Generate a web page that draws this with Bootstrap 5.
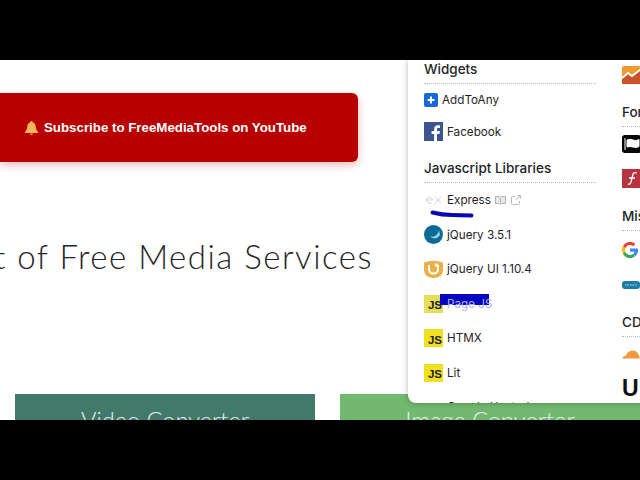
<!doctype html>
<html lang="en">
<head>
<meta charset="utf-8">
<title>Free Media Tools</title>
<link href="https://cdn.jsdelivr.net/npm/bootstrap@5.3.0/dist/css/bootstrap.min.css" rel="stylesheet">
<style>
html,body{margin:0;background:#000;overflow:hidden}
.stage{width:640px;height:480px}
.letterbox{height:60px;flex:none;background:#000}
.pagearea{height:360px;flex:none;background:#fff;position:relative;overflow:hidden}
.subbanner{margin-top:33px;width:358px;height:69px;flex:none;background:#b80000;border-radius:0 6px 6px 0;box-shadow:0 3px 8px rgba(184,0,0,.28);color:#fff;font:700 13.3px "Liberation Sans",sans-serif;padding-left:24px;gap:5px}
.herohead{margin-top:72px;margin-bottom:0;width:373px;height:44px;justify-content:flex-end;overflow:hidden;white-space:nowrap;font:300 33px/44px Lato,sans-serif;letter-spacing:1.5px;color:#262626;flex:none}
.toolrow{margin-top:116px;padding-left:15px;gap:25px;flex:none}
.toolcard{width:300px;height:60px;flex:none;color:#e6f2ee;font:300 23.6px/1 Lato,sans-serif;text-align:center;padding-top:15px}
.tool-a{background:#41796b}
.tool-b{background:#72b86e}
.popmenu{position:absolute;left:408px;top:0;width:300px;height:343px;background:#fff;border-radius:0 0 0 8px;box-shadow:0 0 6px rgba(0,0,0,.28);overflow:hidden;font:400 11.7px Inter,sans-serif;color:#1f2328;padding-left:16px;gap:26px}
.menucol{width:172px;flex:none}
.menucol-b{width:60px;flex:none}
.menuhead{font-weight:500;font-size:13.5px;line-height:18px;padding-bottom:5px;border-bottom:1px dotted #bbb;margin:0;color:#22262a}
.menuhead-gap{margin-top:11px}
.menuhead-top{margin-top:13px}
.menurow{height:34.5px;gap:4px;align-items:center;white-space:nowrap;position:relative}
.menurow-w1{height:31px}
.menurow-w2{height:33px}
.righticon{height:34.5px;align-items:center}
.righticon-lead{height:30px}
.righticon-push{margin-top:2px}
.jsbadge{width:19px;height:18px;background:#f0e020;color:#222;font:700 11.5px/1 "Liberation Sans",sans-serif;display:flex;align-items:flex-end;justify-content:flex-end;padding:0 1px 1px 0;flex:none}
.jsbadge-pale{background:#e6de5a}
.exmark{margin-left:2px;margin-right:1px}
.tinyglyph{margin-left:1px}
.penline{position:absolute;left:6px;top:27px}
.markerbox{position:absolute;left:16px;top:7px;width:49px;height:11px;background:#0505c0}
.markedtext{position:relative;color:#aab2f2}
.lowerrow{padding-left:23px}
.ubold{font:900 23px/1 "Liberation Sans",sans-serif;color:#111}
</style>
</head>
<body>
<div class="stage d-flex flex-column">
  <div class="letterbox"></div>
  <main class="pagearea d-flex flex-column">
    <div class="subbanner d-flex align-items-center">
      <svg width="15" height="14" viewBox="0 0 15 14"><path d="M7.500 0C6.600 0 6.200.7 6.200 1.300 4 2 3.400 4 3.200 6c-.2 2.300-1 3.700-2.200 4.800V12h13v-1.200C12.800 9.700 12 8.300 11.800 6 11.600 4 11 2 8.800 1.300 8.800.7 8.400 0 7.500 0z" fill="#f3b35c"/><path d="M6 12.500h3c0 1-.7 1.500-1.500 1.500S6 13.500 6 12.500z" fill="#ec8f4a"/></svg>
      <span>Subscribe to FreeMediaTools on YouTube</span>
    </div>
    <h1 class="herohead d-flex">List of Free Media Services</h1>
    <div class="toolrow d-flex">
      <div class="toolcard tool-a">Video Converter</div>
      <div class="toolcard tool-b">Image Converter</div>
    </div>

    <aside class="popmenu d-flex">
      <div class="menucol">
        <h2 class="menuhead">Widgets</h2>
        <div class="menurow menurow-w1 d-flex"><svg width="14" height="14" viewBox="0 0 14 14"><rect width="14" height="14" rx="2" fill="#1768d8"/><path d="M7 3.500v7M3.500 7h7" stroke="#fff" stroke-width="2"/></svg><span>AddToAny</span></div>
        <div class="menurow menurow-w2 d-flex"><svg width="19" height="19" viewBox="0 0 19 19"><rect width="19" height="19" fill="#3b5590"/><path d="M13 19v-7h2.500l.4-3H13V7.300c0-.9.3-1.400 1.500-1.400H16V3.300c-.4 0-1.200-.1-2.200-.1-2.200 0-3.700 1.300-3.700 3.800V9H7.600v3h2.500v7z" fill="#fff"/></svg><span>Facebook</span></div>
        <h2 class="menuhead menuhead-gap">Javascript Libraries</h2>
        <div class="menurow d-flex">
          <svg class="exmark" width="16" height="10" viewBox="0 0 16 10"><path d="M1 5h5.500M6.500 5a3 3 0 1 0-1 2.500M9 1.500l6 7M15 1.500l-6 7" stroke="#d0d0d6" stroke-width="1" fill="none"/></svg>
          <span>Express</span>
          <svg width="11" height="10" viewBox="0 0 11 10"><path d="M.5 1.500h4l1 1 1-1h4v7h-4l-1 1-1-1h-4zM5.500 2.500v6" fill="#e8e8e8" stroke="#b0b0b0"/></svg>
          <svg class="tinyglyph" width="10" height="10" viewBox="0 0 10 10"><path d="M8.500 6v2.500a1 1 0 0 1-1 1h-6a1 1 0 0 1-1-1v-6a1 1 0 0 1 1-1H4M5 5l4.500-4.500M6.500.5h3v3" fill="none" stroke="#b8b8b8"/></svg>
          <svg class="penline" width="44" height="8" viewBox="0 0 44 8"><path d="M2.500 2.500Q12 5 22 5T41.500 5.500" fill="none" stroke="#0a0ab4" stroke-width="4" stroke-linecap="round"/></svg>
        </div>
        <div class="menurow d-flex"><svg width="19" height="19" viewBox="0 0 19 19"><circle cx="9.500" cy="9.500" r="9.500" fill="#0c6a93"/><path d="M15 5c-1 5-5 8-9 6 2 3 7 4 10-1" fill="#8fd0e8"/></svg><span>jQuery 3.5.1</span></div>
        <div class="menurow d-flex"><svg width="19" height="18" viewBox="0 0 19 18"><path d="M0 2.500Q9.500-1 19 2.500V11q-1 7-9.500 7T0 11z" fill="#eab04a"/><path d="M5 5v4a4.500 4.500 0 0 0 9 0V5" fill="none" stroke="#fff" stroke-width="2"/><circle cx="12.500" cy="5" r="1.800" fill="#fff"/></svg><span>jQuery UI 1.10.4</span></div>
        <div class="menurow d-flex"><div class="jsbadge jsbadge-pale">JS</div><div class="markerbox"></div><span class="markedtext">Page JS</span></div>
        <div class="menurow d-flex"><div class="jsbadge">JS</div><span>HTMX</span></div>
        <div class="menurow d-flex"><div class="jsbadge">JS</div><span>Lit</span></div>
        <div class="menurow lowerrow d-flex"><span>Google Hosted</span></div>
      </div>
      <div class="menucol-b">
        <div class="righticon righticon-lead d-flex"><svg width="19" height="18" viewBox="0 0 19 18"><rect width="19" height="18" rx="2" fill="#ef9a2e"/><path d="M0 18V13l6-5 4 3 9-7v14z" fill="#c9532a"/><path d="M0 12l6-5 4 3 9-7" stroke="#fff" stroke-width="1.800" fill="none"/></svg></div>
        <h2 class="menuhead menuhead-top">Fonts</h2>
        <div class="righticon d-flex"><svg width="19" height="18" viewBox="0 0 19 18"><rect width="19" height="18" rx="3" fill="#050505"/><path d="M3 3v12M5 5q3-1.500 6 0t6-.5v7q-3 1.500-6 .5t-6 0z" stroke="#fff" fill="#fff"/></svg></div>
        <div class="righticon d-flex"><svg width="19" height="19" viewBox="0 0 19 19"><rect width="19" height="19" fill="#b5343f"/><path d="M6 15q2 1 3-2l2-8q1-2 4-1M7 9h6" stroke="#fff" stroke-width="1.300" fill="none"/></svg></div>
        <h2 class="menuhead menuhead-gap">Misc</h2>
        <div class="righticon righticon-push d-flex"><svg width="16" height="16" viewBox="0 0 16 16"><path d="M8 3a5 5 0 0 1 3.300 1.300L13.500 2A8 8 0 0 0 .9 4.300l2.500 2A5 5 0 0 1 8 3z" fill="#ea4335"/><path d="M.9 4.300a8 8 0 0 0 0 7.400l2.500-2a5 5 0 0 1 0-3.400z" fill="#fbbc05"/><path d="M.9 11.700A8 8 0 0 0 13.400 14l-2.400-2A5 5 0 0 1 3.400 9.700z" fill="#34a853"/><path d="M16 6.500H8v3.200h4.500A4 4 0 0 1 11 12l2.400 2A8 8 0 0 0 16 6.500z" fill="#4285f4"/></svg></div>
        <div class="righticon d-flex"><svg width="18" height="8" viewBox="0 0 18 8"><rect width="18" height="8" rx="3" fill="#1c7ea5"/><path d="M3 4h12" stroke="#cde" stroke-dasharray="1.500 1"/></svg></div>
        <h2 class="menuhead menuhead-gap">CDN</h2>
        <div class="righticon d-flex"><svg width="19" height="10" viewBox="0 0 19 10"><path d="M0 9.500q1-2.500 4-3 2-5 7-5 5 0 7 8z" fill="#ee9a3f"/></svg></div>
        <div class="righticon d-flex ubold">U</div>
      </div>
    </aside>
  </main>
  <div class="letterbox"></div>
</div>
<script src="https://cdn.jsdelivr.net/npm/bootstrap@5.3.0/dist/js/bootstrap.bundle.min.js"></script>
</body>
</html>
